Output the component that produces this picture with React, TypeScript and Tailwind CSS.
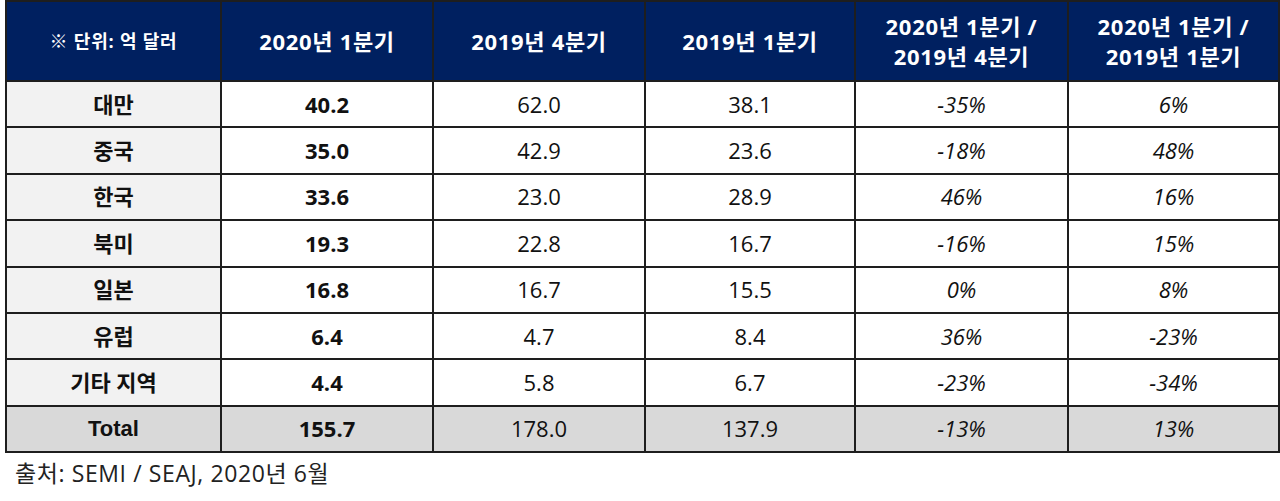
import React from "react";

const font = { fontFamily: "'Open Sans','Noto Sans CJK KR',sans-serif" };

const rows: [string, string, string, string, string, string][] = [
  ["대만", "40.2", "62.0", "38.1", "-35%", "6%"],
  ["중국", "35.0", "42.9", "23.6", "-18%", "48%"],
  ["한국", "33.6", "23.0", "28.9", "46%", "16%"],
  ["북미", "19.3", "22.8", "16.7", "-16%", "15%"],
  ["일본", "16.8", "16.7", "15.5", "0%", "8%"],
  ["유럽", "6.4", "4.7", "8.4", "36%", "-23%"],
  ["기타 지역", "4.4", "5.8", "6.7", "-23%", "-34%"],
];

const widths = ["w-[215px]", "w-[212px]", "w-[212px]", "w-[210px]", "w-[213px]", "w-[211px]"];

export default function App() {
  const cell = "border-2 border-[#1e1e1e] text-center align-middle p-0";
  return (
    <div className="w-[1280px] h-[501px] bg-white overflow-hidden" style={font}>
      <div className="pl-[5px] pt-0">
        <table className="border-collapse table-fixed w-[1273px] text-[#111]">
          <colgroup>
            {widths.map((w, i) => (
              <col key={i} className={w} />
            ))}
          </colgroup>
          <thead>
            <tr className="h-[80px] bg-[#002060] text-white font-bold">
              <th className={`${cell} text-[18px] tracking-[0.8px] font-bold`}>※ 단위: 억 달러</th>
              <th className={`${cell} text-[22px] tracking-[0.7px]`}>2020년 1분기</th>
              <th className={`${cell} text-[22px] tracking-[0.7px]`}>2019년 4분기</th>
              <th className={`${cell} text-[22px] tracking-[0.7px]`}>2019년 1분기</th>
              <th className={`${cell} text-[22px] tracking-[0.7px] leading-[30px]`}>
                2020년 1분기 /<br />2019년 4분기
              </th>
              <th className={`${cell} text-[22px] tracking-[0.7px] leading-[30px]`}>
                2020년 1분기 /<br />2019년 1분기
              </th>
            </tr>
          </thead>
          <tbody>
            {rows.map((r, i) => (
              <tr key={i} className="h-[46.4px] text-[22px]">
                <td className={`${cell} bg-[#f2f2f2] font-bold`}>{r[0]}</td>
                <td className={`${cell} bg-white font-bold`}>{r[1]}</td>
                <td className={`${cell} bg-white`}>{r[2]}</td>
                <td className={`${cell} bg-white`}>{r[3]}</td>
                <td className={`${cell} bg-white italic`}>{r[4]}</td>
                <td className={`${cell} bg-white italic`}>{r[5]}</td>
              </tr>
            ))}
            <tr className="h-[46.4px] text-[22px] bg-[#d9d9d9]">
              <td className={`${cell} font-bold`} style={{ fontFamily: "'Liberation Sans',Arial,sans-serif" }}>
                Total
              </td>
              <td className={`${cell} font-bold`}>155.7</td>
              <td className={cell}>178.0</td>
              <td className={cell}>137.9</td>
              <td className={`${cell} italic`}>-13%</td>
              <td className={`${cell} italic`}>13%</td>
            </tr>
          </tbody>
        </table>
        <div className="pl-[10px] pt-[5px] text-[23px] tracking-[0.6px] text-[#222] leading-[30px]">출처: SEMI / SEAJ, 2020년 6월</div>
      </div>
    </div>
  );
}
